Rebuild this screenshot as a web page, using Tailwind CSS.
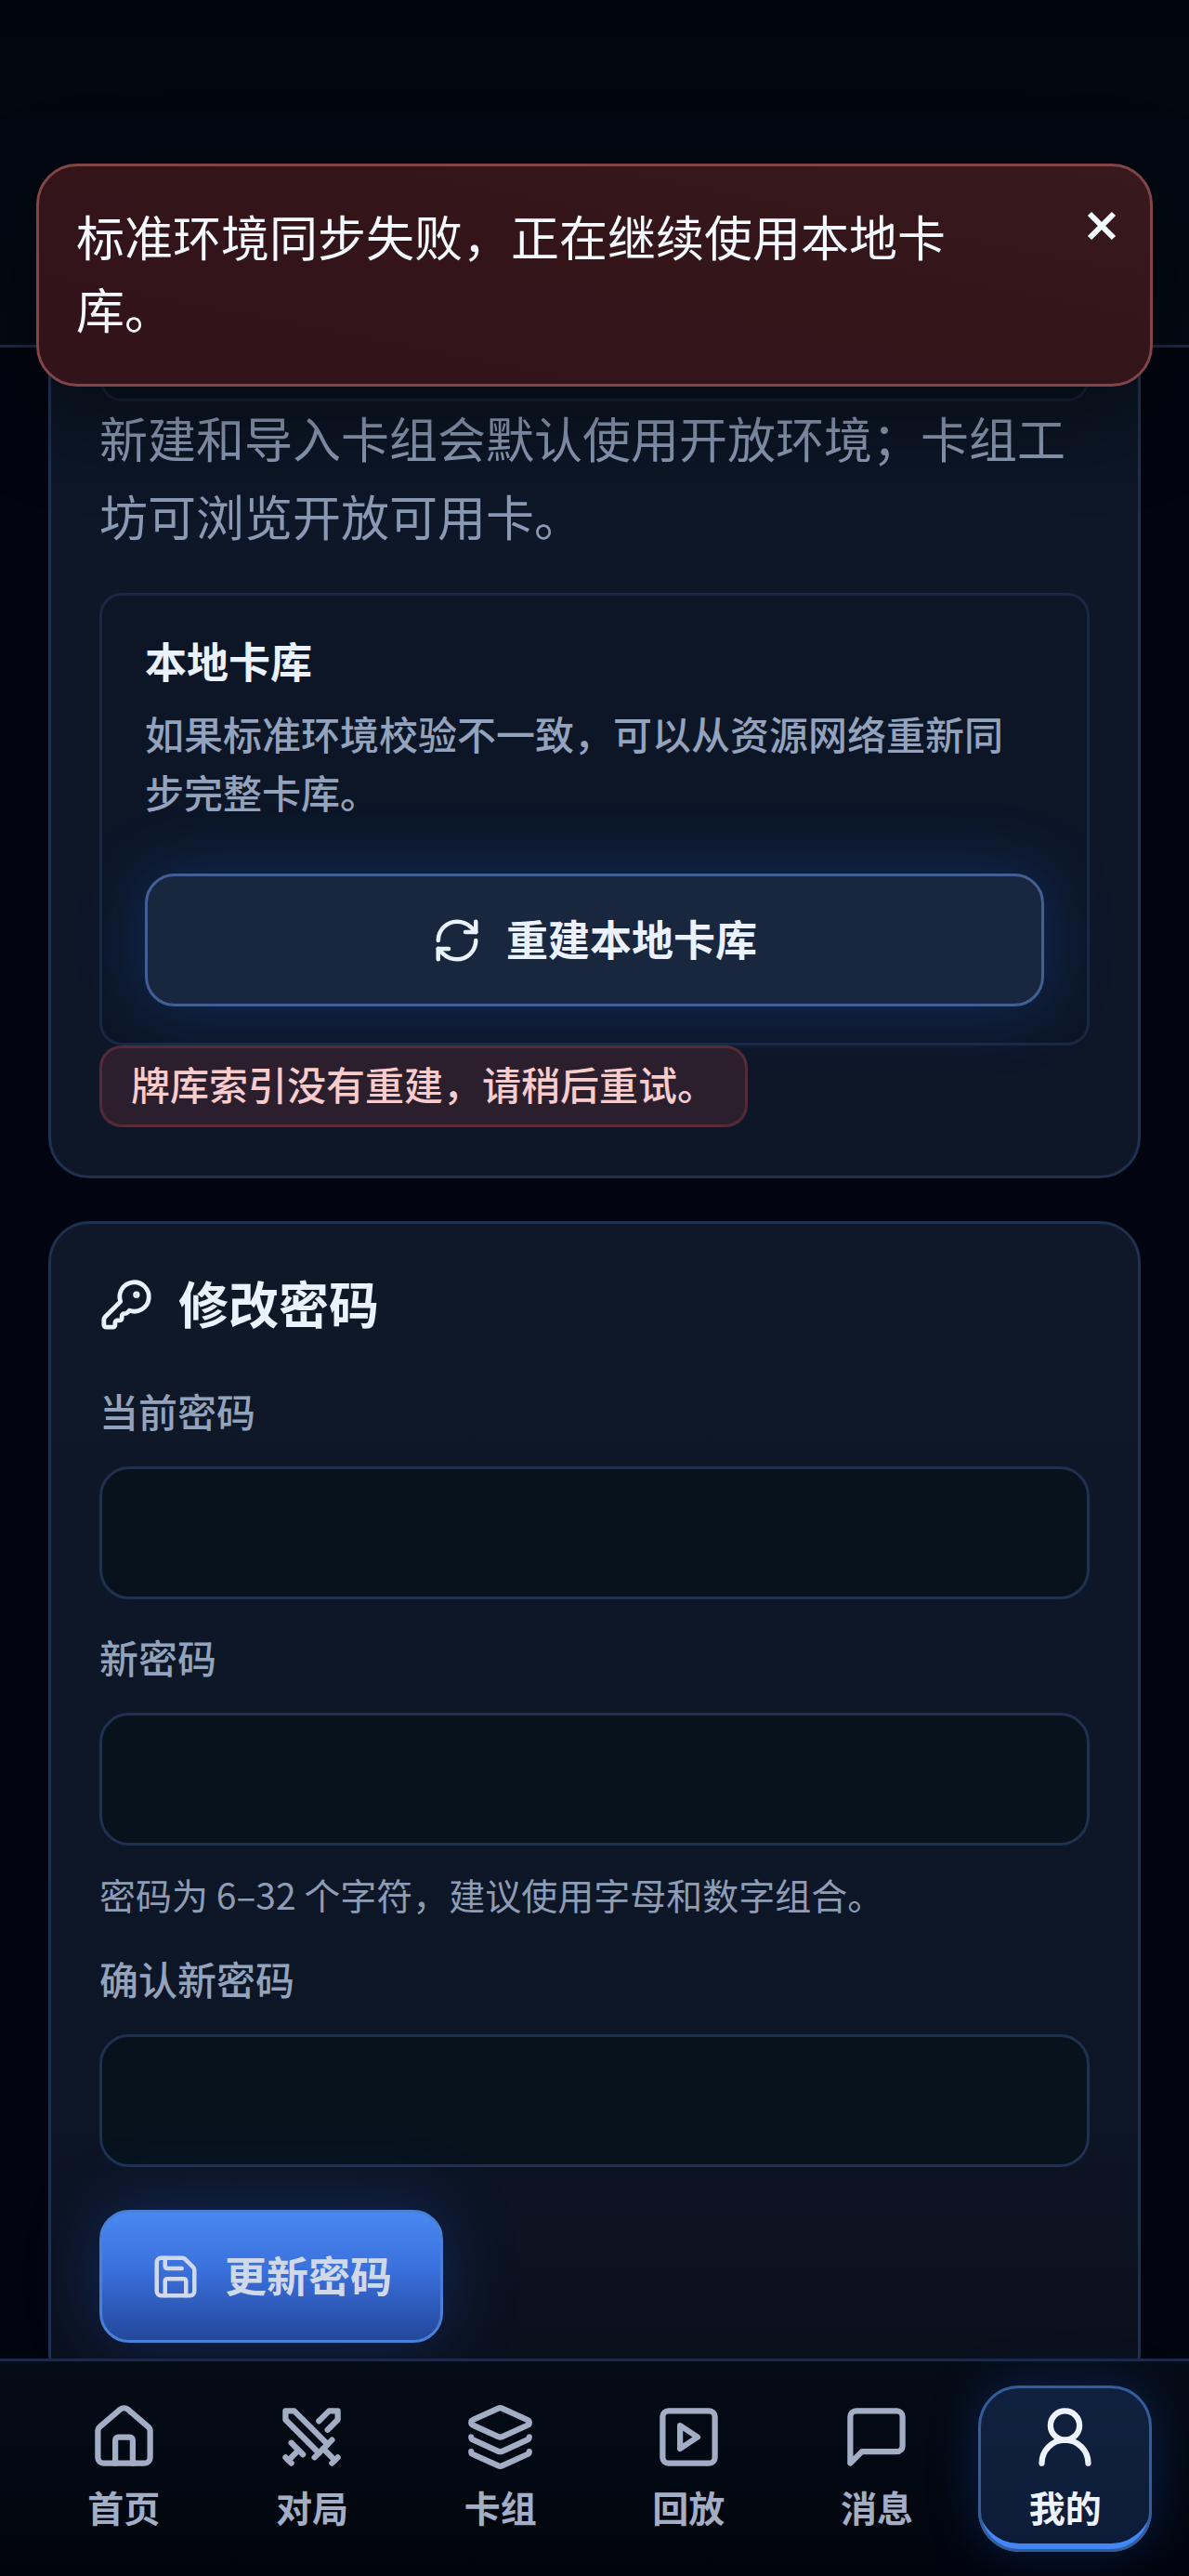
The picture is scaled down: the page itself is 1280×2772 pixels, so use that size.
<!DOCTYPE html>
<html lang="zh-CN">
<head>
  <meta charset="UTF-8">
  <meta name="viewport" content="width=device-width, initial-scale=1">
  <title>我的</title>
  <script src="https://cdn.jsdelivr.net/npm/@tailwindcss/browser@4"></script>
</head>
<body class="bg-[#02050f] text-[#eaf1ff] font-['Noto_Sans_CJK_SC',sans-serif]">

  <div class="relative flex flex-col h-screen overflow-hidden">

    <!-- Header -->
    <header class="h-[374px] shrink-0 border-b-3 border-[#1a2a45] bg-linear-to-b from-[#01060e] to-[#030a13]"></header>

    <!-- Toast -->
    <div role="alert" class="absolute z-20 inset-x-[39px] top-44 flex items-start justify-between rounded-[44px] border-3 border-[#834448] bg-linear-to-bl from-[#38191e] via-[#331419] to-[#311319] pl-10 pr-7 pt-9 pb-[42px] shadow-[0_32px_100px_rgba(0,0,0,0.4)]">
      <p class="max-w-[960px] text-[52px] leading-[78px] text-[#f5faff]">标准环境同步失败，正在继续使用本地卡库。</p>
      <button type="button" aria-label="关闭" class="mt-1 flex size-12 shrink-0 items-center justify-center text-[#f5ffff]">
        <svg class="size-12" fill="none" stroke="currentColor" stroke-width="3" viewBox="0 0 24 24">
          <path d="M5.500 5.500l13 13M18.500 5.500l-13 13" />
        </svg>
      </button>
    </div>

    <main class="flex-1 min-h-0 overflow-hidden px-[52px]">

      <!-- Environment card -->
      <section class="rounded-b-[44px] border-3 border-t-0 border-[#1f3152] bg-linear-to-b from-[#0a1422] to-[#0e1728] to-20% px-[52px] pb-[52px]">
        <div class="h-[58px] rounded-b-3xl border-3 border-t-0 border-[#16233a] bg-[#0a1220]"></div>
        <p class="-mt-[3px] text-[52px] leading-[84px] text-[#8a9ab4]">新建和导入卡组会默认使用开放环境；卡组工坊可浏览开放可用卡。</p>

        <div class="mt-[41px] rounded-3xl border-3 border-[#1a2842] bg-[#0c1627] px-[46px] pt-9 pb-[39px]">
          <h3 class="text-[45px] leading-[68px] font-bold">本地卡库</h3>
          <p class="mt-3 pr-8 text-[42px] leading-[63px] font-medium text-[#94a3bd]">如果标准环境校验不一致，可以从资源网络重新同步完整卡库。</p>
          <button type="button" class="mt-[57px] flex h-[143px] w-full items-center justify-center gap-[26px] rounded-[32px] border-3 border-[#425f96] bg-[#19273e] text-[45px] font-bold shadow-[0_0_72px_rgba(37,99,235,0.28)]">
            <svg class="size-[54px]" fill="none" stroke="currentColor" stroke-width="2" stroke-linecap="round" stroke-linejoin="round" viewBox="0 0 24 24">
              <path d="M3 12a9 9 0 0 1 9-9 9.750 9.750 0 0 1 6.740 2.740L21 8" />
              <path d="M21 3v5h-5" />
              <path d="M21 12a9 9 0 0 1-9 9 9.750 9.750 0 0 1-6.740-2.740L3 16" />
              <path d="M8 16H3v5" />
            </svg>
            <span class="pb-1">重建本地卡库</span>
          </button>
        </div>

        <p role="status" class="w-fit rounded-3xl border-3 border-[#552b37] bg-[#2b1f2d] px-[31px] pt-[7px] pb-[13px] text-[42px] leading-[62px] font-medium text-[#f8cccd]">牌库索引没有重建，请稍后重试。</p>
      </section>

      <!-- Password card -->
      <section class="mt-[46px] rounded-[44px] border-3 border-[#1f3152] bg-linear-to-b from-[#0e1828] via-[#0d1627] via-75% to-[#0a0f1a] px-[52px] py-[52px]">
        <h2 class="flex h-[70px] items-center gap-[27px] text-[54px] leading-[70px] font-bold">
          <svg class="size-[58px]" fill="none" stroke="currentColor" stroke-width="2" stroke-linecap="round" stroke-linejoin="round" viewBox="0 0 24 24">
            <path d="M2.586 17.414A2 2 0 0 0 2 18.828V21a1 1 0 0 0 1 1h3a1 1 0 0 0 1-1v-1a1 1 0 0 1 1-1h1a1 1 0 0 0 1-1v-1a1 1 0 0 1 1-1h.172a2 2 0 0 0 1.414-.586l.814-.814a6.500 6.500 0 1 0-4-4z" />
            <circle cx="16.500" cy="7.500" r=".5" fill="currentColor" />
          </svg>
          <span class="pb-1">修改密码</span>
        </h2>

        <form class="mt-[47px]">
          <label for="currentPassword" class="block text-[42px] leading-[63px] font-medium text-[#94a3bd]">当前密码</label>
          <input type="password" id="currentPassword" class="mt-[29px] block h-[143px] w-full rounded-[32px] border-3 border-[#1f314f] bg-[#08121d] px-10 text-[48px]">

          <label for="newPassword" class="mt-[30px] block text-[42px] leading-[63px] font-medium text-[#94a3bd]">新密码</label>
          <input type="password" id="newPassword" aria-describedby="passwordHint" class="mt-[29px] block h-[143px] w-full rounded-[32px] border-3 border-[#1f314f] bg-[#08121d] px-10 text-[48px]">
          <p id="passwordHint" class="mt-[23px] text-[39px] leading-[58px] text-[#8e9db5]">密码为 6–32 个字符，建议使用字母和数字组合。</p>

          <label for="confirmPassword" class="mt-[30px] block text-[42px] leading-[63px] font-medium text-[#94a3bd]">确认新密码</label>
          <input type="password" id="confirmPassword" class="mt-[29px] block h-[143px] w-full rounded-[32px] border-3 border-[#1f314f] bg-[#08121d] px-10 text-[48px]">

          <button type="submit" class="mt-[46px] flex h-[143px] items-center gap-[26px] rounded-[32px] border-3 border-[#4b80d8] bg-linear-to-b from-[#4988f2] via-[#3a70dc] via-45% to-[#23489c] px-[52px] text-[45px] font-bold text-[#d0d9ea] shadow-[0_0_80px_rgba(37,99,235,0.3)]">
            <svg class="size-[54px]" fill="none" stroke="currentColor" stroke-width="2" stroke-linecap="round" stroke-linejoin="round" viewBox="0 0 24 24">
              <path d="M15.200 3a2 2 0 0 1 1.400.6l3.800 3.800a2 2 0 0 1 .6 1.400V19a2 2 0 0 1-2 2H5a2 2 0 0 1-2-2V5a2 2 0 0 1 2-2z" />
              <path d="M17 21v-7a1 1 0 0 0-1-1H8a1 1 0 0 0-1 1v7" />
              <path d="M7 3v4a1 1 0 0 0 1 1h7" />
            </svg>
            <span class="pb-1">更新密码</span>
          </button>
        </form>
      </section>
    </main>

    <!-- Bottom navigation -->
    <nav class="relative z-10 shrink-0 border-t-3 border-[#1b2b47] bg-linear-to-b from-[#060c17] via-[#030912] to-[#01040c] px-10 py-[26px]">
      <ul class="grid grid-cols-6 gap-4 text-[39px] leading-[58px] font-bold text-[#a2aec6]">
        <li>
          <a href="#home" class="flex flex-col items-center gap-2 pt-[18px] pb-5">
            <svg class="size-[75px]" fill="none" stroke="currentColor" stroke-width="2" stroke-linecap="round" stroke-linejoin="round" viewBox="0 0 24 24">
              <path d="M15 21v-8a1 1 0 0 0-1-1h-4a1 1 0 0 0-1 1v8" />
              <path d="M3 10a2 2 0 0 1 .709-1.528l7-5.999a2 2 0 0 1 2.582 0l7 5.999A2 2 0 0 1 21 10v9a2 2 0 0 1-2 2H5a2 2 0 0 1-2-2z" />
            </svg>
            首页
          </a>
        </li>
        <li>
          <a href="#match" class="flex flex-col items-center gap-2 pt-[18px] pb-5">
            <svg class="size-[75px]" fill="none" stroke="currentColor" stroke-width="2" stroke-linecap="round" stroke-linejoin="round" viewBox="0 0 24 24">
              <path d="M14.500 17.500L3 6V3h3l11.500 11.500" />
              <path d="M13 19l6-6" />
              <path d="M16 16l4 4" />
              <path d="M19 21l2-2" />
              <path d="M14.500 6.500L18 3h3v3l-3.500 3.500" />
              <path d="M5 14l4 4" />
              <path d="M7 17l-3 3" />
              <path d="M3 19l2 2" />
            </svg>
            对局
          </a>
        </li>
        <li>
          <a href="#decks" class="flex flex-col items-center gap-2 pt-[18px] pb-5">
            <svg class="size-[75px]" fill="none" stroke="currentColor" stroke-width="2" stroke-linecap="round" stroke-linejoin="round" viewBox="0 0 24 24">
              <path d="M12.830 2.180a2 2 0 0 0-1.660 0L2.600 6.080a1 1 0 0 0 0 1.830l8.580 3.910a2 2 0 0 0 1.660 0l8.580-3.900a1 1 0 0 0 0-1.830z" />
              <path d="M2 12a1 1 0 0 0 .58.91l8.600 3.910a2 2 0 0 0 1.650 0l8.580-3.900A1 1 0 0 0 22 12" />
              <path d="M2 17a1 1 0 0 0 .58.91l8.600 3.910a2 2 0 0 0 1.650 0l8.580-3.900A1 1 0 0 0 22 17" />
            </svg>
            卡组
          </a>
        </li>
        <li>
          <a href="#replay" class="flex flex-col items-center gap-2 pt-[18px] pb-5">
            <svg class="size-[75px]" fill="none" stroke="currentColor" stroke-width="2" stroke-linecap="round" stroke-linejoin="round" viewBox="0 0 24 24">
              <rect x="3" y="3" width="18" height="18" rx="2" />
              <path d="M9 8l6 4-6 4z" />
            </svg>
            回放
          </a>
        </li>
        <li>
          <a href="#messages" class="flex flex-col items-center gap-2 pt-[18px] pb-5">
            <svg class="size-[75px]" fill="none" stroke="currentColor" stroke-width="2" stroke-linecap="round" stroke-linejoin="round" viewBox="0 0 24 24">
              <path d="M21 15a2 2 0 0 1-2 2H7l-4 4V5a2 2 0 0 1 2-2h14a2 2 0 0 1 2 2z" />
            </svg>
            消息
          </a>
        </li>
        <li>
          <a href="#me" aria-current="page" class="flex flex-col items-center gap-2 rounded-[44px] bg-linear-to-b from-[#10213f] to-[#0c1c38] pt-[18px] pb-5 text-[#eef4ff] shadow-[inset_0_0_0_3px_#345c98,inset_0_-9px_0_0_#4287f5,0_0_54px_rgba(37,99,235,0.25)]">
            <svg class="size-[75px]" fill="none" stroke="currentColor" stroke-width="2" stroke-linecap="round" stroke-linejoin="round" viewBox="0 0 24 24">
              <circle cx="12" cy="8" r="5" />
              <path d="M20 21a8 8 0 0 0-16 0" />
            </svg>
            我的
          </a>
        </li>
      </ul>
    </nav>
  </div>

</body>
</html>
